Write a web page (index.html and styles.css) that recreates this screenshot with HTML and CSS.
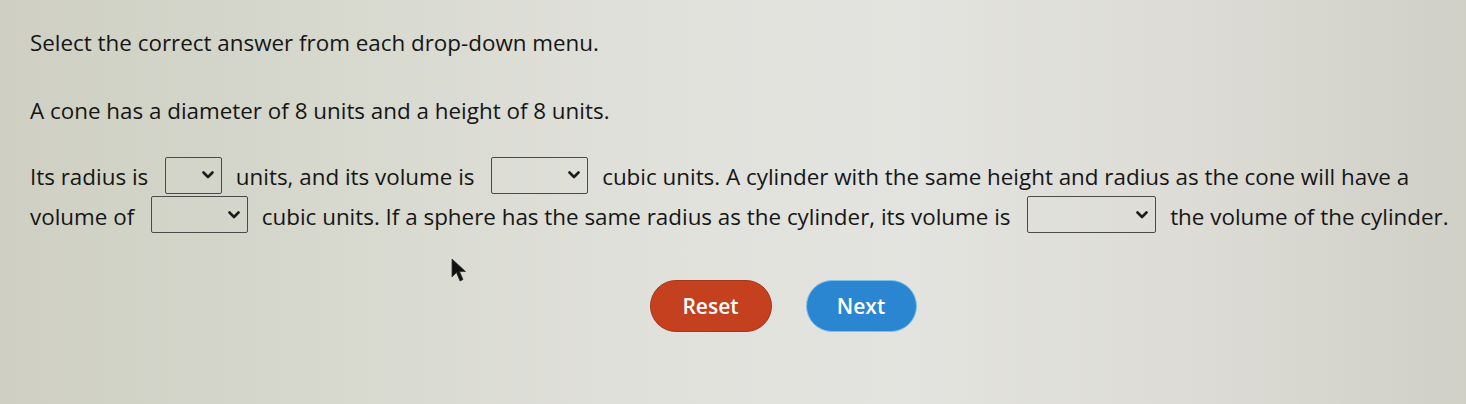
FILE: index.html
```html
<!DOCTYPE html>
<html>
<head>
<meta charset="utf-8">
<link rel="stylesheet" href="styles.css">
</head>
<body>
<main class="page">
  <p class="instr">Select the correct answer from each drop-down menu.</p>
  <p class="given">A cone has a diameter of 8 units and a height of 8 units.</p>
  <p class="question">Its radius is <span class="dd dd-s"><svg class="chev" viewBox="0 0 12 8"><path d="M1.5 1.5 L6 6 L10.5 1.5" /></svg></span> units, and its volume is <span class="dd dd-m"><svg class="chev" viewBox="0 0 12 8"><path d="M1.5 1.5 L6 6 L10.5 1.5" /></svg></span> cubic units. A cylinder with the same height and radius as the cone will have a<br>volume of <span class="dd dd-m"><svg class="chev" viewBox="0 0 12 8"><path d="M1.5 1.5 L6 6 L10.5 1.5" /></svg></span> cubic units. If a sphere has the same radius as the cylinder, its volume is <span class="dd dd-l"><svg class="chev" viewBox="0 0 12 8"><path d="M1.5 1.5 L6 6 L10.5 1.5" /></svg></span> the volume of the cylinder.</p>
  <div class="actions">
    <button class="btn btn-reset">Reset</button>
    <button class="btn btn-next">Next</button>
  </div>
  <svg class="cursor" viewBox="0 0 16 26" width="16" height="26"><path d="M1 1 L1 19 L5.5 14.5 L9 23 L12 21.5 L8.5 13.5 L14.5 13.5 Z" fill="#111" stroke="#333" stroke-width="0.8"/></svg>
</main>
</body>
</html>
```

FILE: styles.css
```css
html, body {
  margin: 0;
  padding: 0;
}
body {
  width: 1466px;
  height: 404px;
  overflow: hidden;
  background: linear-gradient(90deg, #cfd0c3 0%, #d8d9cf 25%, #e1e1dc 45%, #e3e3df 62%, #dddcd6 80%, #d1d0c7 100%);
  font-family: "Open Sans", "Liberation Sans", sans-serif;
  color: #161616;
}
.page {
  position: relative;
  padding: 28px 0 0 30px;
}
p {
  margin: 0;
  font-size: 22.4px;
  line-height: 30px;
}
.instr {
  margin-bottom: 38px;
}
.given {
  margin-bottom: 32px;
}
.question {
  line-height: 38px;
  white-space: nowrap;
}
.dd {
  display: inline-flex;
  align-items: center;
  justify-content: flex-end;
  box-sizing: border-box;
  height: 37px;
  vertical-align: middle;
  margin: 0 8px 0 11px;
  border: 1.5px solid #4a4a48;
  border-radius: 2px;
  padding-right: 7px;
  position: relative;
  top: -4px;
}
.dd-s { width: 57px; }
.dd-m { width: 97px; }
.dd-l { width: 129px; }
.chev {
  width: 12px;
  height: 8px;
}
.chev path {
  fill: none;
  stroke: #1c1c1c;
  stroke-width: 2.6;
  stroke-linecap: round;
  stroke-linejoin: round;
}
.actions {
  display: flex;
  justify-content: center;
  gap: 34px;
  margin-top: 43px;
  padding-left: 70px;
}
.btn {
  height: 52px;
  border-radius: 26px;
  font-family: "Open Sans", "Liberation Sans", sans-serif;
  font-size: 21px;
  font-weight: 600;
  color: #fff;
  padding: 0;
}
.btn-reset {
  width: 122px;
  background: #c4401f;
  border: 1.5px solid #a83419;
}
.btn-next {
  width: 111px;
  background: #2a86d1;
  border: 1.5px solid #7fc0ea;
}
.cursor {
  position: absolute;
  left: 451px;
  top: 258px;
}
```
